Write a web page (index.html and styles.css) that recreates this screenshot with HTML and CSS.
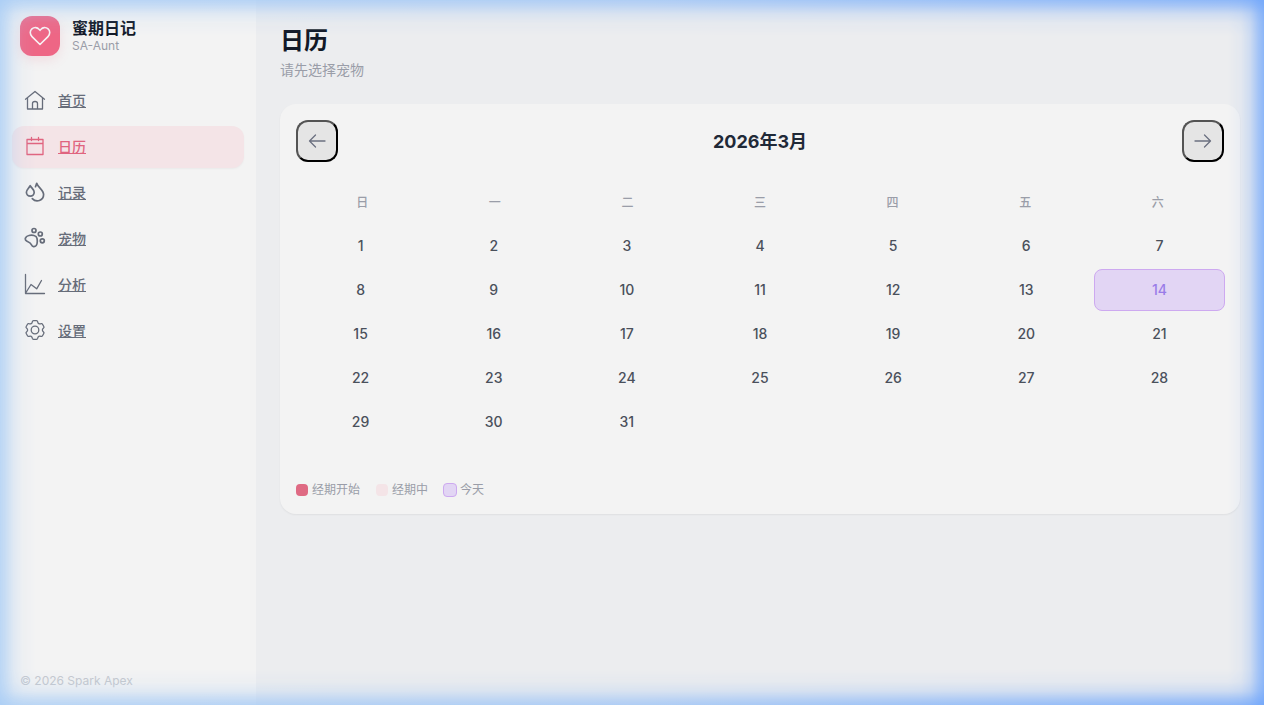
FILE: index.html
```
<!DOCTYPE html>
<html lang="zh-CN">
  <head>
    <meta charset="UTF-8" />
    <meta name="viewport" content="width=device-width, initial-scale=1.0" />
    <title>蜜期日记</title>
    <link rel="stylesheet" href="styles.css">
  </head>
  <body>
    <div class="app">
      <aside class="sidebar">
        <div class="brand">
          <div class="logo">
            <svg width="24" height="24" viewBox="0 0 24 24">
              <path d="M12 20.500 4 12.600C1.700 10.300 1.700 6.800 3.900 4.900 6.200 2.900 9.400 3.300 11 5.200L12 6.300 13 5.200C14.600 3.300 17.800 2.900 20.100 4.900 22.300 6.800 22.300 10.300 20 12.600Z" />
            </svg>
          </div>
          <div>
            <div class="brand-name">蜜期日记</div>
            <div class="brand-sub">SA-Aunt</div>
          </div>
        </div>
        <nav class="nav">
          <a class="nav-item" href="#home">
            <svg class="icon" viewBox="0 0 22 22">
              <path d="M1.500 10.200 11 2.500 20.500 10.200M3.500 8.800V20H18.500V8.800M8.500 20V14.500Q8.500 12.500 11 12.500T13.500 14.500V20" />
            </svg>
            <span>首页</span>
          </a>
          <a class="nav-item active" href="#calendar">
            <svg class="icon" viewBox="0 0 22 22">
              <path d="M3 4.500H19V19.500H3ZM3 8.500H19M7.500 2.500V5.500M14.500 2.500V5.500" />
            </svg>
            <span>日历</span>
          </a>
          <a class="nav-item" href="#records">
            <svg class="icon bold" viewBox="0 0 22 22">
              <path d="M6.200 4.700C4.500 7.500 2.400 8.800 2.400 11.300A3.900 3.900 0 0 0 10.200 11.300C10.200 8.800 8 7.500 6.200 4.700ZM11.500 5.700 12.700 2.300C14 6.600 19.600 8.800 19.600 13.600 19.600 19.700 12.200 21.900 8.300 17.600" />
            </svg>
            <span>记录</span>
          </a>
          <a class="nav-item" href="#pets">
            <svg class="icon bold" viewBox="0 0 22 22">
              <circle cx="10" cy="3.500" r="2" />
              <circle cx="16.300" cy="7" r="2" />
              <circle cx="18.300" cy="13.800" r="2" />
              <path d="M4.800 8.500C8 7.700 12.500 8.300 13 11.300 13.400 13.600 13.700 16.500 12.200 18.500 10.800 20.200 8.300 19.900 7.600 18 6.800 15.700 5 15 3 14.200 0 12.800 1.200 9.300 4.800 8.500Z" />
            </svg>
            <span>宠物</span>
          </a>
          <a class="nav-item" href="#analysis">
            <svg class="icon" viewBox="0 0 22 22">
              <path d="M1.500 1.500V20.500H20.500M2 19.500 7 11.500 12.700 15.800 17.500 7.500" />
            </svg>
            <span>分析</span>
          </a>
          <a class="nav-item" href="#settings">
            <svg class="icon" viewBox="0 0 22 22">
              <circle cx="11" cy="11" r="3.800" />
              <path d="M9.500 1.700H12.500Q13.500 1.700 13.700 2.800C14 4.700 15.200 5.300 17 4.700Q18 4.300 18.500 5.200L19.800 7.500Q20.300 8.400 19.500 9.100C18 10.300 18 11.700 19.500 12.900Q20.300 13.600 19.800 14.500L18.500 16.800Q18 17.700 17 17.300C15.200 16.700 14 17.300 13.700 19.200Q13.500 20.300 12.500 20.300H9.500Q8.500 20.300 8.300 19.200C8 17.300 6.800 16.700 5 17.300Q4 17.700 3.500 16.800L2.200 14.500Q1.700 13.600 2.500 12.900C4 11.700 4 10.300 2.500 9.100Q1.700 8.400 2.200 7.500L3.500 5.200Q4 4.300 5 4.700C6.800 5.300 8 4.700 8.300 2.800Q8.500 1.700 9.500 1.700Z" />
            </svg>
            <span>设置</span>
          </a>
        </nav>
        <div class="copyright">© 2026 Spark Apex</div>
      </aside>

      <main class="main">
        <h1 class="title">日历</h1>
        <p class="subtitle">请先选择宠物</p>

        <section class="card">
          <div class="month-bar">
            <button class="arrow" type="button" aria-label="上个月">
              <svg width="20" height="20" viewBox="0 0 20 20">
                <path d="M18 10H2.500M8.500 4 2.500 10 8.500 16" />
              </svg>
            </button>
            <h2 class="month">2026年3月</h2>
            <button class="arrow" type="button" aria-label="下个月">
              <svg width="20" height="20" viewBox="0 0 20 20">
                <path d="M2 10H17.500M11.500 4 17.500 10 11.500 16" />
              </svg>
            </button>
          </div>
          <div class="weekdays">
            <span>日</span>
            <span>一</span>
            <span>二</span>
            <span>三</span>
            <span>四</span>
            <span>五</span>
            <span>六</span>
          </div>
          <div class="days">
            <button class="day" type="button">1</button>
            <button class="day" type="button">2</button>
            <button class="day" type="button">3</button>
            <button class="day" type="button">4</button>
            <button class="day" type="button">5</button>
            <button class="day" type="button">6</button>
            <button class="day" type="button">7</button>
            <button class="day" type="button">8</button>
            <button class="day" type="button">9</button>
            <button class="day" type="button">10</button>
            <button class="day" type="button">11</button>
            <button class="day" type="button">12</button>
            <button class="day" type="button">13</button>
            <button class="day today" type="button">14</button>
            <button class="day" type="button">15</button>
            <button class="day" type="button">16</button>
            <button class="day" type="button">17</button>
            <button class="day" type="button">18</button>
            <button class="day" type="button">19</button>
            <button class="day" type="button">20</button>
            <button class="day" type="button">21</button>
            <button class="day" type="button">22</button>
            <button class="day" type="button">23</button>
            <button class="day" type="button">24</button>
            <button class="day" type="button">25</button>
            <button class="day" type="button">26</button>
            <button class="day" type="button">27</button>
            <button class="day" type="button">28</button>
            <button class="day" type="button">29</button>
            <button class="day" type="button">30</button>
            <button class="day" type="button">31</button>
          </div>
          <div class="legend">
            <span class="legend-item"><i class="dot start"></i>经期开始</span>
            <span class="legend-item"><i class="dot during"></i>经期中</span>
            <span class="legend-item"><i class="dot now"></i>今天</span>
          </div>
        </section>
      </main>
    </div>
    <div class="glow"></div>
  </body>
</html>
```
FILE: styles.css
```
* {
  box-sizing: border-box;
}

body {
  margin: 0;
  background: #ecedef;
  color: #111827;
  font-family: Inter, "Noto Sans CJK SC", sans-serif;
}

svg {
  fill: none;
  stroke: currentColor;
  stroke-linecap: round;
  stroke-linejoin: round;
}

.app {
  display: flex;
  min-height: 100vh;
}

/* sidebar */
.sidebar {
  display: flex;
  flex-direction: column;
  flex: 0 0 256px;
  background: #f3f3f3;
}

.brand {
  display: flex;
  align-items: center;
  gap: 12px;
  padding: 16px 20px;
}

.logo {
  display: flex;
  align-items: center;
  justify-content: center;
  width: 40px;
  height: 40px;
  border-radius: 12px;
  background: #ee6685;
  box-shadow: 0 4px 12px rgba(236, 100, 130, 0.15);
  color: #f8f3f4;
}

.logo svg {
  stroke-width: 1.6;
}

.brand-name {
  font-size: 16px;
  font-weight: 700;
  line-height: 20px;
}

.brand-sub {
  color: #9a9da8;
  font-size: 12px;
  line-height: 16px;
}

.nav {
  display: flex;
  flex-direction: column;
  gap: 4px;
  padding: 8px 12px;
}

.nav-item {
  display: flex;
  align-items: center;
  gap: 12px;
  height: 42px;
  padding: 0 12px 2px;
  border-radius: 12px;
  color: #666c79;
  font-size: 14px;
  font-weight: 500;
}

.nav-item.active {
  background: #f4e4e7;
  box-shadow: 0 1px 2px rgba(0, 0, 0, 0.04);
  color: #e0647f;
}

.icon {
  width: 22px;
  height: 22px;
  stroke-width: 1.3;
}

.icon.bold {
  stroke-width: 1.7;
}

.copyright {
  margin-top: auto;
  padding: 16px 20px;
  color: #c5c8ce;
  font-size: 12px;
  line-height: 16px;
}

/* calendar */
.main {
  flex: 1;
  min-width: 0;
  padding: 24px;
}

.title {
  margin: 0;
  font-size: 24px;
  font-weight: 700;
  line-height: 34px;
}

.subtitle {
  margin: 2px 0 24px;
  color: #9a9da8;
  font-size: 14px;
  line-height: 20px;
}

.card {
  padding: 16px;
  border-radius: 16px;
  background: #f3f3f3;
  box-shadow: 0 1px 2px rgba(0, 0, 0, 0.06);
}

.month-bar {
  display: flex;
  align-items: center;
  justify-content: space-between;
}

.arrow {
  display: flex;
  align-items: center;
  justify-content: center;
  width: 42px;
  height: 42px;
  padding: 0;
  border: 2px outset #000;
  border-radius: 12px;
  background: #e5e5e5;
  color: #6b7080;
}

.arrow svg {
  stroke-width: 1.3;
}

.month {
  margin: 0;
  padding-bottom: 2px;
  color: #1f2937;
  font-size: 18px;
  font-weight: 700;
}

.weekdays {
  display: grid;
  grid-template-columns: repeat(7, 1fr);
  margin: 33px 0 14px;
  color: #9a9da8;
  font-size: 12px;
  font-weight: 500;
  line-height: 16px;
  text-align: center;
}

.days {
  display: grid;
  grid-template-columns: repeat(7, 1fr);
  gap: 2px 4px;
}

.day {
  height: 42px;
  padding: 0 0 2px;
  border: 1px solid transparent;
  border-radius: 8px;
  background: none;
  color: #4a505b;
  font-family: inherit;
  font-size: 14px;
  font-weight: 500;
}

.day.today {
  margin: 0 -1px;
  border-color: #cda9f0;
  background: #e2d5f4;
  color: #9a7ce8;
}

.legend {
  display: flex;
  gap: 16px;
  margin-top: 39px;
  color: #9a9da8;
  font-size: 12px;
  line-height: 16px;
}

.legend-item {
  display: flex;
  align-items: center;
  gap: 4px;
}

.dot {
  width: 12px;
  height: 12px;
  border-radius: 4px;
}

.dot.start {
  background: #df6a83;
}

.dot.during {
  background: #f4e4e7;
}

/* the outline sits outside the 12px swatch */
.dot.now {
  width: 14px;
  height: 14px;
  margin: 0 -1px;
  border: 1px solid #cda9f0;
  background: #e2d5f4;
}

/* blue light round the window */
.glow {
  --fade: rgba(0, 0, 0, 0.76), rgba(0, 0, 0, 0.56) 6px, rgba(0, 0, 0, 0.24) 14px, rgba(0, 0, 0, 0.07) 23px, transparent 36px;
  position: fixed;
  inset: 0;
  background: linear-gradient(to right, #a9cdf5, #9cc3f6 50%, #6ea5fb);
  -webkit-mask-image: linear-gradient(to right, var(--fade)), linear-gradient(to left, var(--fade)), linear-gradient(to bottom, var(--fade)), linear-gradient(to top, var(--fade));
  mask-image: linear-gradient(to right, var(--fade)), linear-gradient(to left, var(--fade)), linear-gradient(to bottom, var(--fade)), linear-gradient(to top, var(--fade));
  pointer-events: none;
}
```
